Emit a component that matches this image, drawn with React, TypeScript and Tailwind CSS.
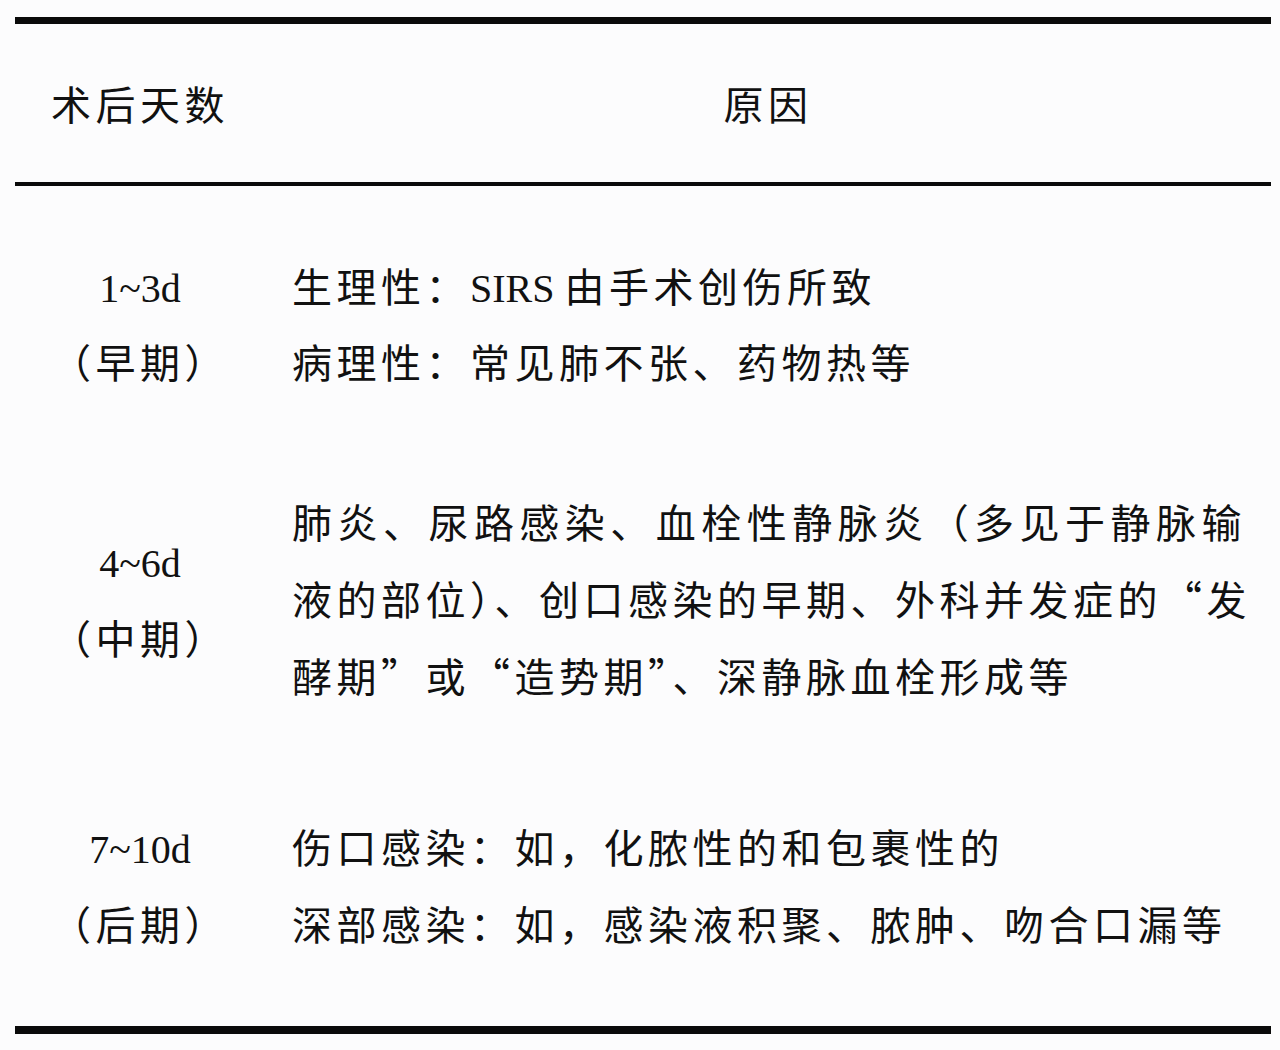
const latin = 'font-["Liberation_Serif",serif] tracking-normal leading-none';

const Row = ({
  left,
  right,
  className,
  leading,
}: {
  left: React.ReactNode[];
  right: React.ReactNode[];
  className: string;
  leading: string;
}) => (
  <div className={`grid grid-cols-[250px_1fr] ${className}`}>
    <div className={`flex flex-col items-center justify-center ${leading}`}>
      {left.map((l, i) => (
        <div key={i} className="whitespace-nowrap">
          {l}
        </div>
      ))}
    </div>
    <div className={`pl-[27px] ${leading}`}>
      {right.map((r, i) => (
        <div key={i} className="whitespace-nowrap">
          {r}
        </div>
      ))}
    </div>
  </div>
);

const Justified = ({ children }: { children: React.ReactNode }) => (
  <div className="w-[954px] text-justify [text-align-last:justify] whitespace-nowrap">
    {children}
  </div>
);

export default function App() {
  return (
    <div className='w-[1280px] h-[1050px] bg-[#fcfcfd] pt-[17px] pl-[15px] text-[#111] text-[40px] tracking-[4.5px] font-["Noto_Sans_CJK_SC",sans-serif]'>
      <div className="w-[1256px]">
        <div className="h-[7px] bg-[#0a0a0a]" />
        <div className="grid grid-cols-[250px_1fr] h-[158px] items-center">
          <div className="text-center">术后天数</div>
          <div className="text-center">原因</div>
        </div>
        <div className="h-[4px] bg-[#0a0a0a]" />

        <Row
          className="pt-[61px]"
          leading="leading-[76px]"
          left={[
            <span className={latin}>1~3d</span>,
            '（早期）',
          ]}
          right={[
            <>
              生理性：<span className={latin}>SIRS </span>由手术创伤所致
            </>,
            '病理性：常见肺不张、药物热等',
          ]}
        />

        <Row
          className="pt-[84px]"
          leading="leading-[77px]"
          left={[
            <span className={latin}>4~6d</span>,
            '（中期）',
          ]}
          right={[
            <Justified>肺炎、尿路感染、血栓性静脉炎（多见于静脉输</Justified>,
            <Justified>液的部位）、创口感染的早期、外科并发症的“发</Justified>,
            '酵期”或“造势期”、深静脉血栓形成等',
          ]}
        />

        <Row
          className="pt-[94px]"
          leading="leading-[77px]"
          left={[
            <span className={latin}>7~10d</span>,
            '（后期）',
          ]}
          right={[
            '伤口感染：如，化脓性的和包裹性的',
            '深部感染：如，感染液积聚、脓肿、吻合口漏等',
          ]}
        />

        <div className="mt-[64px] h-[8px] bg-[#0a0a0a]" />
      </div>
    </div>
  );
}
